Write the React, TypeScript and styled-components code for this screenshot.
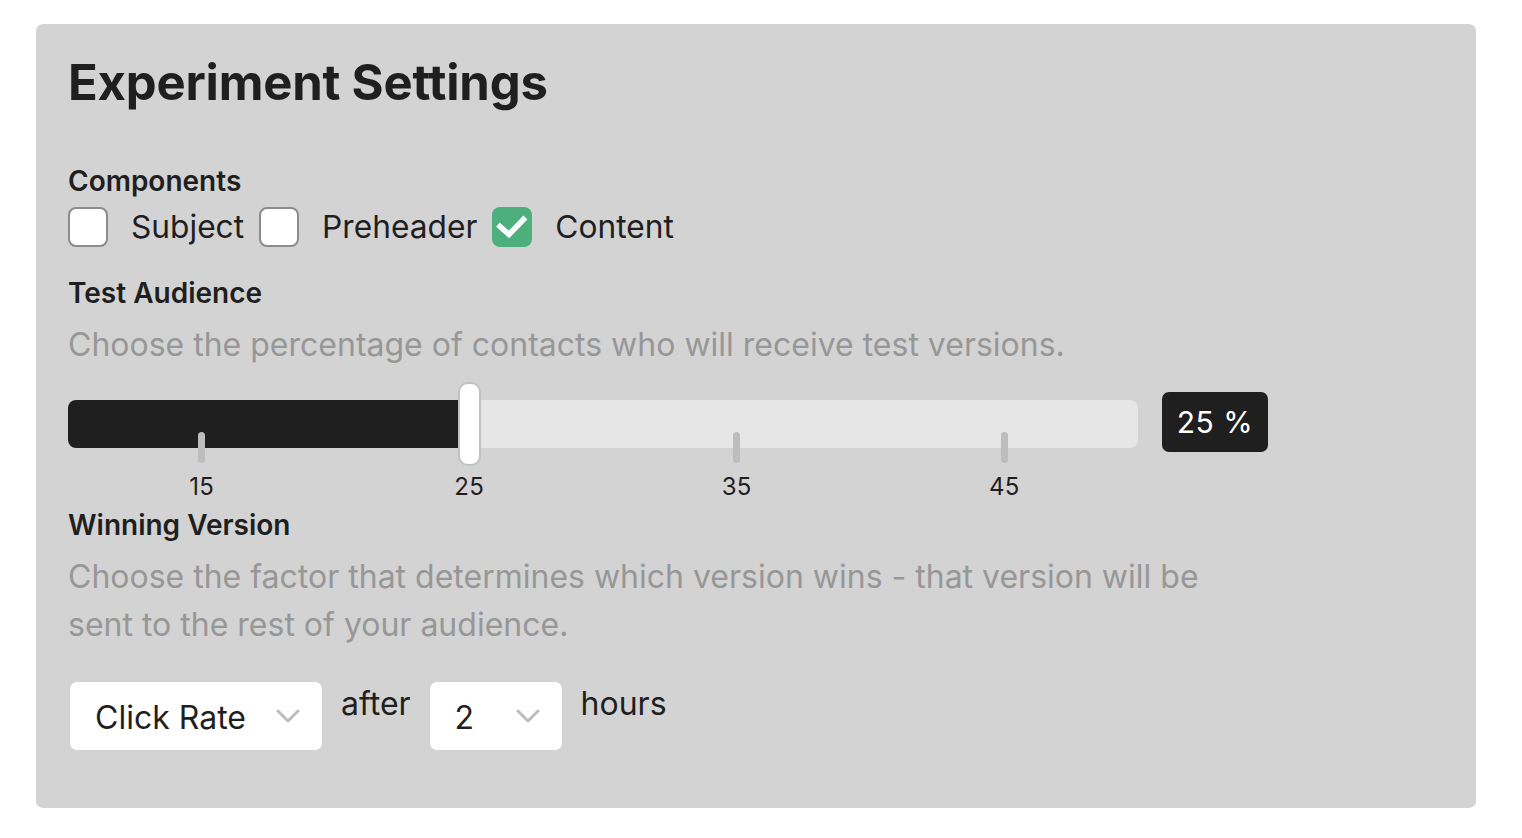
import React from "react";
import styled, { createGlobalStyle } from "styled-components";

const Global = createGlobalStyle`
  html, body { margin: 0; padding: 0; background: #ffffff; }
  body { font-family: Inter, "Noto Sans", sans-serif; color: #1f1f1f; }
  * { box-sizing: border-box; }
`;

const Page = styled.div`
  padding: 24px 46px 30px 36px;
`;

const Panel = styled.section`
  width: 1440px;
  height: 784px;
  background: #d3d3d3;
  border-radius: 7px;
  padding: 30px 32px;
  display: flex;
  flex-direction: column;
`;

const Title = styled.h1`
  margin: 0 0 52px;
  font-size: 49px;
  line-height: 58px;
  font-weight: 700;
  color: #1f1f1f;
  letter-spacing: -0.2px;
`;

const Label = styled.h2<{ $mt?: number }>`
  margin: ${(p) => p.$mt ?? 0}px 0 0;
  font-size: 28px;
  line-height: 34px;
  font-weight: 600;
  color: #1f1f1f;
`;

const CheckRow = styled.div`
  display: flex;
  align-items: center;
  gap: 15px;
  margin-top: 7px;
`;

const CheckItem = styled.label`
  display: flex;
  align-items: center;
  gap: 23px;
  font-size: 31.7px;
  line-height: 44px;
  color: #1f1f1f;
`;

const Box = styled.span<{ $checked?: boolean }>`
  width: 40px;
  height: 40px;
  border-radius: 8px;
  border: ${(p) => (p.$checked ? "none" : "2px solid #8c8c8c")};
  background: ${(p) => (p.$checked ? "#4caf7c" : "#ffffff")};
  display: flex;
  align-items: center;
  justify-content: center;
`;

const Desc = styled.p<{ $mt?: number }>`
  margin: ${(p) => p.$mt ?? 0}px 0 0;
  font-size: 32px;
  line-height: 48px;
  color: #979797;
  max-width: 1160px;
`;

const SliderRow = styled.div`
  display: flex;
  align-items: flex-start;
  gap: 24px;
  margin-top: 7px;
`;

const SliderArea = styled.div`
  position: relative;
  width: 1070px;
  height: 112px;
`;

const Track = styled.div`
  position: absolute;
  left: 0;
  right: 0;
  top: 24px;
  height: 48px;
  border-radius: 8px;
  background: #e6e6e6;
  overflow: hidden;
`;

const Fill = styled.div`
  height: 100%;
  background: #1f1f1f;
`;

const Tick = styled.span`
  position: absolute;
  top: 56px;
  width: 7px;
  height: 31px;
  margin-left: -3.5px;
  border-radius: 4px;
  background: #bdbdbd;
`;

const TickLabel = styled.span`
  position: absolute;
  top: 97px;
  transform: translateX(-50%);
  font-size: 24px;
  line-height: 28px;
  color: #1f1f1f;
  letter-spacing: 0.3px;
`;

const Thumb = styled.span`
  position: absolute;
  top: 6px;
  width: 23px;
  height: 84px;
  margin-left: -11.5px;
  border-radius: 10px;
  background: #ffffff;
  border: 2px solid #c2c2c2;
`;

const ValueBox = styled.div`
  width: 106px;
  height: 60px;
  border-radius: 7px;
  background: #1f1f1f;
  color: #ffffff;
  font-size: 30px;
  display: flex;
  align-items: center;
  justify-content: center;
  margin-top: 16px;
  letter-spacing: 0.5px;
`;

const SelectRow = styled.div`
  display: flex;
  align-items: flex-start;
  gap: 19px;
  margin-top: 33px;
  padding-left: 2px;
`;

const SelectBox = styled.div<{ $w: number }>`
  width: ${(p) => p.$w}px;
  height: 68px;
  border-radius: 7px;
  background: #ffffff;
  display: flex;
  align-items: center;
  justify-content: space-between;
  padding: 3px 22px 0 25px;
  font-size: 32px;
  color: #1f1f1f;
`;

const Word = styled.span`
  font-size: 32px;
  line-height: 44px;
  color: #1f1f1f;
`;

const Chevron = () => (
  <svg width="24" height="16" viewBox="0 0 24 16" fill="none" style={{ marginTop: -3 }}>
    <path d="M2 3l10 10L22 3" stroke="#bdbdbd" strokeWidth="3" strokeLinecap="round" strokeLinejoin="round" />
  </svg>
);

const Check = () => (
  <svg width="40" height="40" viewBox="0 0 40 40" fill="none">
    <path d="M8 19.5l9 8L31.5 12.5" stroke="#ffffff" strokeWidth="5.5" strokeLinecap="square" />
  </svg>
);

const MIN = 10;
const MAX = 50;
const VALUE = 25;
const TICKS = [15, 25, 35, 45];
const pct = (v: number) => ((v - MIN) / (MAX - MIN)) * 100;

export default function App() {
  return (
    <>
      <Global />
      <Page>
        <Panel>
          <Title>Experiment Settings</Title>
          <Label>Components</Label>
          <CheckRow>
            <CheckItem>
              <Box />
              Subject
            </CheckItem>
            <CheckItem>
              <Box />
              Preheader
            </CheckItem>
            <CheckItem>
              <Box $checked>
                <Check />
              </Box>
              Content
            </CheckItem>
          </CheckRow>
          <Label $mt={27}>Test Audience</Label>
          <Desc $mt={11}>Choose the percentage of contacts who will receive test versions.</Desc>
          <SliderRow>
            <SliderArea>
              <Track>
                <Fill style={{ width: `${pct(VALUE)}%` }} />
              </Track>
              {TICKS.map((t) => (
                <Tick key={`t${t}`} style={{ left: `${pct(t)}%` }} />
              ))}
              {TICKS.map((t) => (
                <TickLabel key={`l${t}`} style={{ left: `${pct(t)}%` }}>
                  {t}
                </TickLabel>
              ))}
              <Thumb style={{ left: `${pct(VALUE)}%` }} />
            </SliderArea>
            <ValueBox>25 %</ValueBox>
          </SliderRow>
          <Label $mt={20}>Winning Version</Label>
          <Desc $mt={11}>
            Choose the factor that determines which version wins - that version will be sent to the rest of your audience.
          </Desc>
          <SelectRow>
            <SelectBox $w={252}>
              Click Rate
              <Chevron />
            </SelectBox>
            <Word>after</Word>
            <SelectBox $w={132}>
              2
              <Chevron />
            </SelectBox>
            <Word>hours</Word>
          </SelectRow>
        </Panel>
      </Page>
    </>
  );
}
